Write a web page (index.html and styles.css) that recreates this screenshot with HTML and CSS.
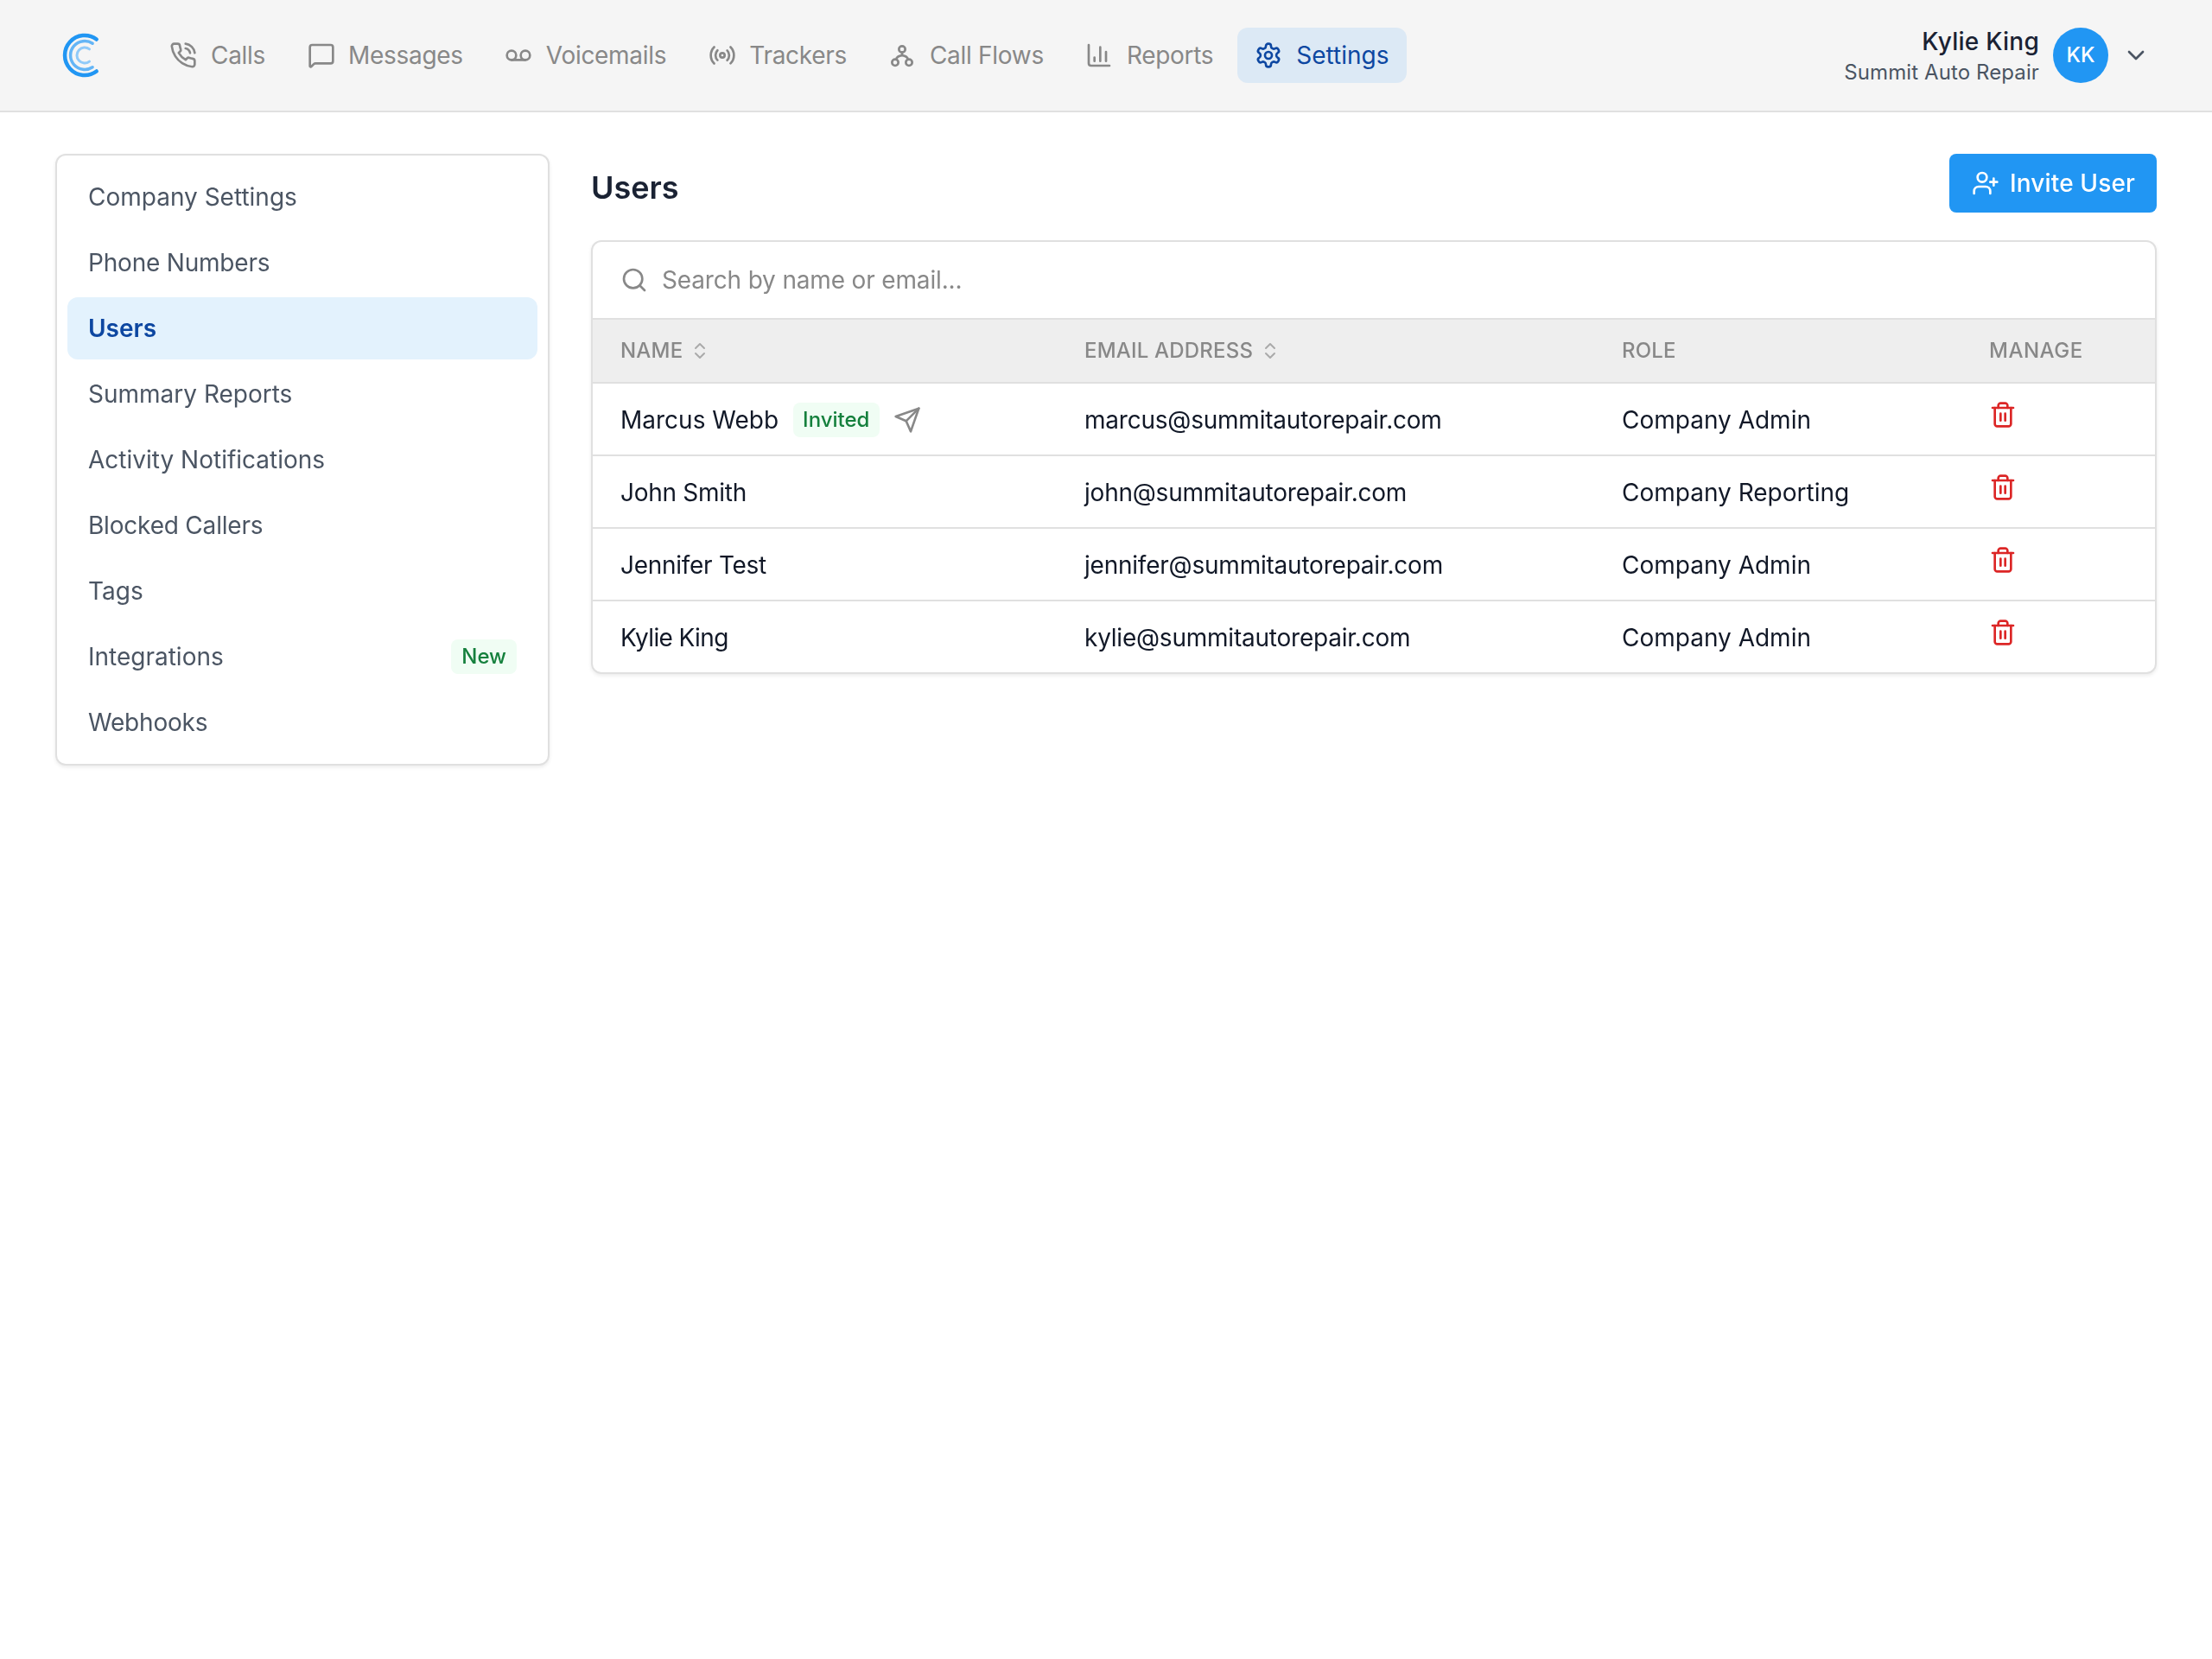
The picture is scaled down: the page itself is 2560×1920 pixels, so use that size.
FILE: index.html
```html
<!DOCTYPE html>
<html>
  <head>
    <title>Users</title>
    <meta charset="utf-8" />
    <link rel="stylesheet" href="styles.css">
  </head>
  <body>
    <header class="topbar">
      <a class="logo" href="#" title="Home">
        <svg width="24" height="28" viewBox="0 0 48 56" fill="none" stroke-linecap="round">
          <path d="M39.7 9.5A23 23 0 1 0 39.7 46.5" stroke="#2196f3" stroke-width="4.5" />
          <path d="M35.1 14.2A16.5 16.5 0 1 0 35.1 41.8" stroke="#64b5f6" stroke-width="3.5" />
          <path d="M31.5 20.9A9 9 0 1 0 31.5 35.1" stroke="#90caf9" stroke-width="3" />
        </svg>
      </a>

      <nav class="main-nav">
        <a class="nav-item" href="#">
          <svg class="icon" viewBox="0 0 24 24">
            <path d="M22 16.92v3a2 2 0 0 1-2.18 2 19.79 19.79 0 0 1-8.63-3.07 19.5 19.5 0 0 1-6-6 19.79 19.79 0 0 1-3.07-8.67A2 2 0 0 1 4.11 2h3a2 2 0 0 1 2 1.72 12.84 12.84 0 0 0 .7 2.81 2 2 0 0 1-.45 2.11L8.09 9.91a16 16 0 0 0 6 6l1.27-1.27a2 2 0 0 1 2.11-.45 12.84 12.84 0 0 0 2.81.7A2 2 0 0 1 22 16.92z" />
            <path d="M14.05 2a9 9 0 0 1 8 7.94" />
            <path d="M14.05 6A5 5 0 0 1 18 10" />
          </svg>
          Calls
        </a>
        <a class="nav-item" href="#">
          <svg class="icon" viewBox="0 0 24 24">
            <path d="M22 17a2 2 0 0 1-2 2H6.828a2 2 0 0 0-1.414.586l-2.202 2.202A.71.71 0 0 1 2 21.286V5a2 2 0 0 1 2-2h16a2 2 0 0 1 2 2z" />
          </svg>
          Messages
        </a>
        <a class="nav-item" href="#">
          <svg class="icon" viewBox="0 0 24 24">
            <circle cx="6" cy="12" r="4" />
            <circle cx="18" cy="12" r="4" />
            <line x1="6" y1="16" x2="18" y2="16" />
          </svg>
          Voicemails
        </a>
        <a class="nav-item" href="#">
          <svg class="icon" viewBox="0 0 24 24">
            <path d="M4.9 19.1C1 15.2 1 8.8 4.9 4.9" />
            <path d="M7.8 16.2c-2.3-2.3-2.3-6.1 0-8.5" />
            <circle cx="12" cy="12" r="2" />
            <path d="M16.2 7.8c2.3 2.3 2.3 6.1 0 8.5" />
            <path d="M19.1 4.9C23 8.8 23 15.1 19.1 19" />
          </svg>
          Trackers
        </a>
        <a class="nav-item" href="#">
          <svg class="icon" viewBox="0 0 24 24">
            <circle cx="12" cy="6.75" r="2.75" />
            <circle cx="6" cy="18.25" r="2.75" />
            <circle cx="18" cy="18.25" r="2.75" />
            <path d="M12 9.5V12" />
            <path d="M7 15.6C7 13 9.5 12.5 12 12C14.5 12.5 17 13 17 15.6" />
          </svg>
          Call Flows
        </a>
        <a class="nav-item" href="#">
          <svg class="icon" viewBox="0 0 24 24">
            <path d="M3 3v16a2 2 0 0 0 2 2h16" />
            <path d="M18 17V9" />
            <path d="M13 17V5" />
            <path d="M8 17v-3" />
          </svg>
          Reports
        </a>
        <a class="nav-item nav-item-active" href="#">
          <svg class="icon" viewBox="0 0 24 24">
            <path d="M12.22 2h-.44a2 2 0 0 0-2 2v.18a2 2 0 0 1-1 1.73l-.43.25a2 2 0 0 1-2 0l-.15-.08a2 2 0 0 0-2.73.73l-.22.38a2 2 0 0 0 .73 2.73l.15.1a2 2 0 0 1 1 1.72v.51a2 2 0 0 1-1 1.74l-.15.09a2 2 0 0 0-.73 2.73l.22.38a2 2 0 0 0 2.73.73l.15-.08a2 2 0 0 1 2 0l.43.25a2 2 0 0 1 1 1.73V20a2 2 0 0 0 2 2h.44a2 2 0 0 0 2-2v-.18a2 2 0 0 1 1-1.73l.43-.25a2 2 0 0 1 2 0l.15.08a2 2 0 0 0 2.73-.73l.22-.39a2 2 0 0 0-.73-2.73l-.15-.08a2 2 0 0 1-1-1.74v-.5a2 2 0 0 1 1-1.74l.15-.09a2 2 0 0 0 .73-2.73l-.22-.38a2 2 0 0 0-2.73-.73l-.15.08a2 2 0 0 1-2 0l-.43-.25a2 2 0 0 1-1-1.73V4a2 2 0 0 0-2-2z" />
            <circle cx="12" cy="12" r="3" />
          </svg>
          Settings
        </a>
      </nav>

      <div class="user-menu">
        <div class="user-info">
          <div class="user-name">Kylie King</div>
          <div class="user-company">Summit Auto Repair</div>
        </div>
        <div class="avatar">KK</div>
        <svg class="icon chevron" viewBox="0 0 24 24">
          <path d="m6 9 6 6 6-6" />
        </svg>
      </div>
    </header>

    <div class="page">
      <aside class="sidebar">
        <a class="side-item" href="#">Company Settings</a>
        <a class="side-item side-item-narrow" href="#">Phone Numbers</a>
        <a class="side-item side-item-active" href="#">Users</a>
        <a class="side-item" href="#">Summary Reports</a>
        <a class="side-item" href="#">Activity Notifications</a>
        <a class="side-item side-item-narrow" href="#">Blocked Callers</a>
        <a class="side-item" href="#">Tags</a>
        <a class="side-item" href="#">Integrations <span class="badge">New</span></a>
        <a class="side-item side-item-narrow" href="#">Webhooks</a>
      </aside>

      <main class="content">
        <div class="content-header">
          <h1>Users</h1>
          <button class="invite-button">
            <svg class="icon" viewBox="0 0 24 24">
              <path d="M16 21v-2a4 4 0 0 0-4-4H6a4 4 0 0 0-4 4v2" />
              <circle cx="9" cy="7" r="4" />
              <line x1="19" y1="8" x2="19" y2="14" />
              <line x1="22" y1="11" x2="16" y2="11" />
            </svg>
            Invite User
          </button>
        </div>

        <div class="card">
          <div class="search-row">
            <svg class="icon" viewBox="0 0 24 24">
              <circle cx="11" cy="11" r="8" />
              <path d="m21 21-4.3-4.3" />
            </svg>
            <input type="text" class="search-input" placeholder="Search by name or email..." />
          </div>

          <table class="users-table">
            <colgroup>
              <col class="col-name" />
              <col class="col-email" />
              <col class="col-role" />
              <col class="col-manage" />
            </colgroup>
            <thead>
              <tr>
                <th>
                  <span class="sort-head">NAME
                    <svg class="sort-icon" viewBox="0 0 24 24">
                      <path d="m7 15 5 5 5-5" />
                      <path d="m7 9 5-5 5 5" />
                    </svg>
                  </span>
                </th>
                <th>
                  <span class="sort-head">EMAIL ADDRESS
                    <svg class="sort-icon" viewBox="0 0 24 24">
                      <path d="m7 15 5 5 5-5" />
                      <path d="m7 9 5-5 5 5" />
                    </svg>
                  </span>
                </th>
                <th>ROLE</th>
                <th class="manage-head">MANAGE</th>
              </tr>
            </thead>
            <tbody>
              <tr>
                <td>
                  <div class="name-cell">
                    Marcus Webb
                    <span class="badge">Invited</span>
                    <svg class="icon send-icon" viewBox="0 0 24 24">
                      <path d="m22 2-7 20-4-9-9-4Z" />
                      <path d="M22 2 11 13" />
                    </svg>
                  </div>
                </td>
                <td class="email-cell">marcus@summitautorepair.com</td>
                <td>Company Admin</td>
                <td>
                  <svg class="icon trash-icon" viewBox="0 0 24 24">
                    <path d="M3 6h18" />
                    <path d="M19 6v14c0 1-1 2-2 2H7c-1 0-2-1-2-2V6" />
                    <path d="M8 6V4c0-1 1-2 2-2h4c1 0 2 1 2 2v2" />
                    <line x1="10" y1="11" x2="10" y2="17" />
                    <line x1="14" y1="11" x2="14" y2="17" />
                  </svg>
                </td>
              </tr>
              <tr>
                <td class="name-narrow">John Smith</td>
                <td class="email-cell">john@summitautorepair.com</td>
                <td>Company Reporting</td>
                <td>
                  <svg class="icon trash-icon" viewBox="0 0 24 24">
                    <path d="M3 6h18" />
                    <path d="M19 6v14c0 1-1 2-2 2H7c-1 0-2-1-2-2V6" />
                    <path d="M8 6V4c0-1 1-2 2-2h4c1 0 2 1 2 2v2" />
                    <line x1="10" y1="11" x2="10" y2="17" />
                    <line x1="14" y1="11" x2="14" y2="17" />
                  </svg>
                </td>
              </tr>
              <tr>
                <td class="name-narrow">Jennifer Test</td>
                <td class="email-cell">jennifer@summitautorepair.com</td>
                <td>Company Admin</td>
                <td>
                  <svg class="icon trash-icon" viewBox="0 0 24 24">
                    <path d="M3 6h18" />
                    <path d="M19 6v14c0 1-1 2-2 2H7c-1 0-2-1-2-2V6" />
                    <path d="M8 6V4c0-1 1-2 2-2h4c1 0 2 1 2 2v2" />
                    <line x1="10" y1="11" x2="10" y2="17" />
                    <line x1="14" y1="11" x2="14" y2="17" />
                  </svg>
                </td>
              </tr>
              <tr>
                <td class="name-narrower">Kylie King</td>
                <td class="email-cell">kylie@summitautorepair.com</td>
                <td>Company Admin</td>
                <td>
                  <svg class="icon trash-icon" viewBox="0 0 24 24">
                    <path d="M3 6h18" />
                    <path d="M19 6v14c0 1-1 2-2 2H7c-1 0-2-1-2-2V6" />
                    <path d="M8 6V4c0-1 1-2 2-2h4c1 0 2 1 2 2v2" />
                    <line x1="10" y1="11" x2="10" y2="17" />
                    <line x1="14" y1="11" x2="14" y2="17" />
                  </svg>
                </td>
              </tr>
            </tbody>
          </table>
        </div>
      </main>
    </div>
  </body>
</html>
```

FILE: styles.css
```css
* {
  box-sizing: border-box;
}

html {
  overflow: hidden;
}

/* laid out at 1280 wide and drawn at double size */
body {
  width: 1280px;
  min-height: 960px;
  margin: 0;
  font-family: Inter, "Noto Sans", sans-serif;
  font-size: 14px;
  line-height: 20px;
  color: #111827;
  background-color: #fff;
  transform: scale(2);
  transform-origin: 0 0;
}

a {
  color: inherit;
  text-decoration: none;
}

.icon {
  width: 16px;
  height: 16px;
  flex-shrink: 0;
  fill: none;
  stroke: currentColor;
  stroke-width: 2;
  stroke-linecap: round;
  stroke-linejoin: round;
}

.topbar {
  display: flex;
  align-items: center;
  height: 65px;
  padding: 0 36px 1px 36px;
  background-color: #f5f5f5;
  border-bottom: 1px solid #e0e0e0;
}

.logo {
  display: flex;
  margin-right: 28px;
}

.main-nav {
  display: flex;
  gap: 4px;
}

.nav-item {
  display: flex;
  align-items: center;
  gap: 8px;
  height: 32px;
  padding: 0 10px;
  color: #888;
  letter-spacing: -0.15px;
  border-radius: 6px;
}

.nav-item-active {
  color: #0d47a1;
  letter-spacing: 0;
  background-color: #dce9f5;
}

.user-menu {
  display: flex;
  align-items: center;
  gap: 8px;
  margin-left: auto;
}

.user-info {
  text-align: right;
}

.user-name {
  font-weight: 500;
  letter-spacing: 0.12px;
  color: #1a2233;
}

.user-company {
  font-size: 12px;
  line-height: 16px;
  letter-spacing: 0.05px;
  color: #4b5563;
}

.avatar {
  display: flex;
  align-items: center;
  justify-content: center;
  width: 32px;
  height: 32px;
  font-size: 12px;
  font-weight: 500;
  color: #fff;
  background-color: #2196f3;
  border-radius: 50%;
}

.chevron {
  color: #4b5563;
}

.page {
  display: flex;
  align-items: flex-start;
  gap: 24px;
  padding: 24px 32px;
}

.sidebar {
  display: flex;
  flex-direction: column;
  gap: 2px;
  width: 286px;
  flex-shrink: 0;
  padding: 6px;
  background-color: #fff;
  border: 1px solid #e0e0e0;
  border-radius: 6px;
  box-shadow: 0 1px 2px rgba(0, 0, 0, 0.08);
}

.side-item {
  display: flex;
  align-items: center;
  justify-content: space-between;
  height: 36px;
  padding: 0 12px;
  color: #4b5563;
  border-radius: 6px;
}

.side-item-narrow {
  letter-spacing: -0.1px;
}

.side-item-active {
  font-weight: 600;
  color: #0d47a1;
  background-color: #e3f2fd;
}

.badge {
  padding: 0 6px;
  font-size: 12px;
  font-weight: 500;
  color: #15803d;
  background-color: #f0fdf4;
  border-radius: 4px;
}

.content {
  flex: 1;
}

.content-header {
  display: flex;
  align-items: flex-end;
  justify-content: space-between;
  margin-bottom: 16px;
}

h1 {
  margin: 0;
  font-size: 18px;
  line-height: 28px;
  font-weight: 600;
  color: #1a2233;
}

.invite-button {
  display: flex;
  align-items: center;
  gap: 6.5px;
  height: 34px;
  padding: 0 12.5px 1px;
  font-family: inherit;
  font-size: 14px;
  font-weight: 500;
  letter-spacing: 0.07px;
  color: #fff;
  background-color: #2196f3;
  border: none;
  border-radius: 4px;
  cursor: pointer;
}

.card {
  overflow: hidden;
  background-color: #fff;
  border: 1px solid #e0e0e0;
  border-radius: 6px;
  box-shadow: 0 1px 2px rgba(0, 0, 0, 0.08);
}

.search-row {
  display: flex;
  align-items: center;
  gap: 8px;
  height: 45px;
  padding: 0 16px 1px;
  color: #888;
  border-bottom: 1px solid #e0e0e0;
}

.search-input {
  flex: 1;
  padding: 0;
  font-family: inherit;
  font-size: 14px;
  letter-spacing: -0.08px;
  color: #111827;
  background: none;
  border: none;
  outline: none;
}

.search-input::placeholder {
  color: #888;
  opacity: 1;
}

.users-table {
  width: 100%;
  table-layout: fixed;
  border-collapse: separate;
  border-spacing: 0;
}

.col-name {
  width: 268.5px;
}

.col-email {
  width: 311px;
}

.col-role {
  width: 212.5px;
}

.col-manage {
  width: 112px;
}

.users-table th {
  height: 37px;
  padding: 0 16px;
  font-size: 12px;
  font-weight: 500;
  letter-spacing: 0.1px;
  text-align: left;
  color: #888;
  background-color: #eee;
  border-bottom: 1px solid #e0e0e0;
}

.users-table .manage-head {
  letter-spacing: 0.25px;
}

.users-table td {
  height: 42px;
  padding: 0 16px;
  border-bottom: 1px solid #e0e0e0;
}

.users-table tbody tr:last-child td {
  height: 41px;
  border-bottom: none;
}

.users-table .email-cell {
  letter-spacing: -0.11px;
}

.users-table .name-narrow {
  letter-spacing: -0.14px;
}

.users-table .name-narrower {
  letter-spacing: -0.32px;
}

.sort-head {
  display: inline-flex;
  align-items: center;
  gap: 4px;
}

.sort-icon {
  width: 12px;
  height: 12px;
  fill: none;
  stroke: #aaa;
  stroke-width: 2;
  stroke-linecap: round;
  stroke-linejoin: round;
}

.name-cell {
  display: flex;
  align-items: center;
  gap: 8px;
}

.send-icon {
  color: #888;
}

.trash-icon {
  display: block;
  margin-bottom: 5px;
  color: #dc2626;
}
```
